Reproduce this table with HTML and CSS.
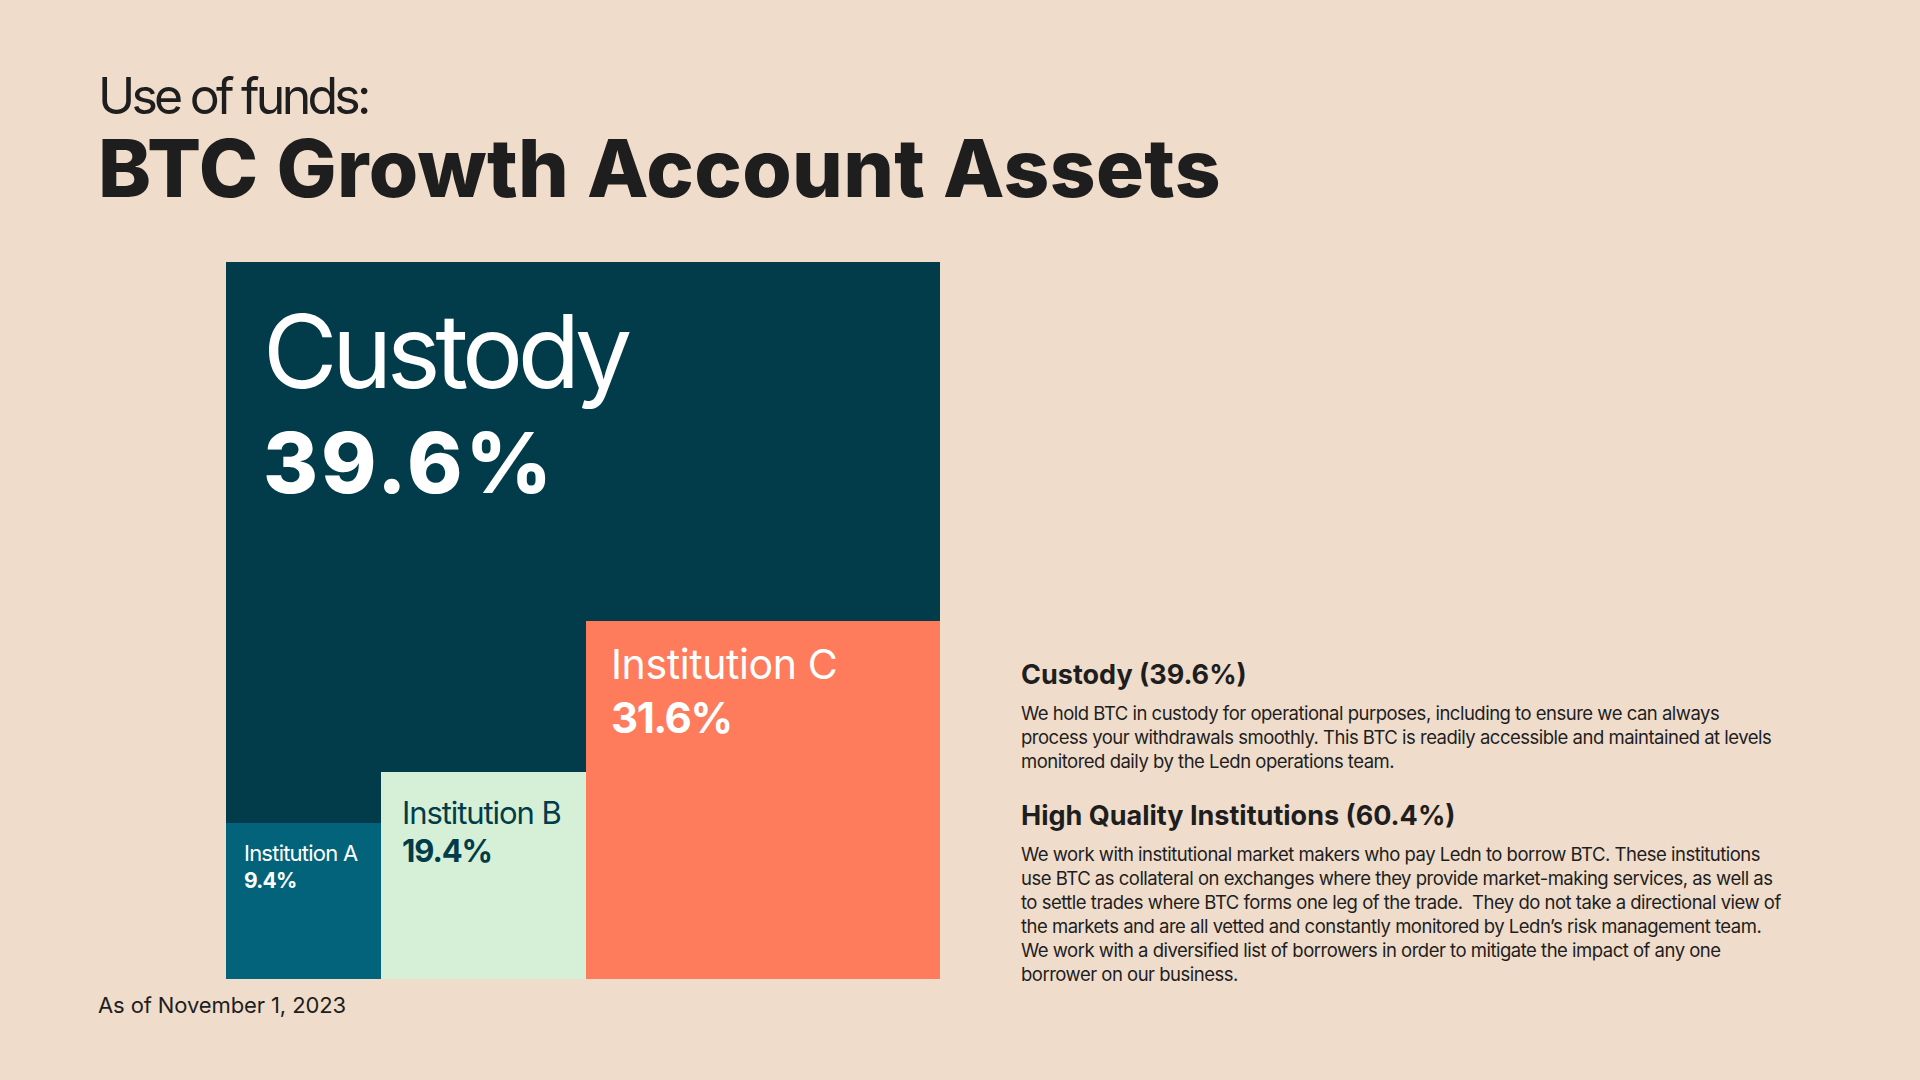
FILE: index.html
```html
<!DOCTYPE html>
<html lang="en">
<head>
<meta charset="utf-8">
<title>Use of funds: BTC Growth Account Assets</title>
<link rel="stylesheet" href="styles.css">
</head>
<body>
<main class="page">
  <header class="header">
    <p class="kicker">Use of funds:</p>
    <h1 class="title">BTC Growth Account Assets</h1>
  </header>
  <section class="content">
    <div class="chart-col">
      <div class="treemap">
        <div class="custody-label">
          <div class="big-name">Custody</div>
          <div class="big-pct">39.6%</div>
        </div>
        <div class="inst-row">
          <div class="tile tile-a">
            <div class="name">Institution A</div>
            <div class="pct">9.4%</div>
          </div>
          <div class="tile tile-b">
            <div class="name">Institution B</div>
            <div class="pct">19.4%</div>
          </div>
          <div class="tile tile-c">
            <div class="name">Institution C</div>
            <div class="pct">31.6%</div>
          </div>
        </div>
      </div>
    </div>
    <div class="notes">
      <h2 class="note-title">Custody (39.6%)</h2>
      <p class="note-text">We hold BTC in custody for operational purposes, including to ensure we can always<br>process your withdrawals smoothly. This BTC is readily accessible and maintained at levels<br>monitored daily by the Ledn operations team.</p>
      <h2 class="note-title second">High Quality Institutions (60.4%)</h2>
      <p class="note-text">We work with institutional market makers who pay Ledn to borrow BTC. These institutions<br>use BTC as collateral on exchanges where they provide market-making services, as well as<br>to settle trades where BTC forms one leg of the trade.&nbsp; They do not take a directional view of<br>the markets and are all vetted and constantly monitored by Ledn’s risk management team.<br>We work with a diversified list of borrowers in order to mitigate the impact of any one<br>borrower on our business.</p>
    </div>
  </section>
  <p class="date">As of November 1, 2023</p>
</main>
</body>
</html>
```

FILE: styles.css
```css
* { box-sizing: border-box; }

html, body {
  margin: 0;
  padding: 0;
}

body {
  width: 1920px;
  height: 1080px;
  overflow: hidden;
  background: #efdccb;
  color: #1e1e1e;
  font-family: Inter, "Noto Sans", "Liberation Sans", sans-serif;
}

.page {
  padding: 71px 0 0 98px;
}

.header {
  display: flex;
  flex-direction: column;
}

.kicker {
  margin: 0;
  font-size: 50px;
  line-height: 1;
  font-weight: 400;
  letter-spacing: -0.075em;
}

.title {
  margin: 7px 0 0 0;
  font-size: 80px;
  line-height: 1;
  font-weight: 800;
  letter-spacing: 0.004em;
}

.content {
  display: flex;
  align-items: flex-end;
  gap: 81px;
  margin-top: 54px;
}

.chart-col {
  padding-left: 128px;
}

.treemap {
  width: 714px;
  height: 717px;
  background: #023c4a;
  display: flex;
  flex-direction: column;
  color: #ffffff;
}

.custody-label {
  padding: 38px 0 0 37px;
}

.big-name {
  font-size: 102px;
  line-height: 1;
  font-weight: 400;
  letter-spacing: -0.054em;
}

.big-pct {
  margin-top: 19px;
  font-size: 84px;
  line-height: 1;
  font-weight: 800;
  letter-spacing: 0.035em;
}

.inst-row {
  margin-top: auto;
  display: flex;
  align-items: flex-end;
}

.tile {
  display: flex;
  flex-direction: column;
}

.tile .name,
.tile .pct {
  line-height: 1;
  letter-spacing: -0.035em;
}

.tile .name { font-weight: 400; }
.tile .pct { font-weight: 700; }

.tile-a {
  width: 155px;
  height: 156px;
  background: #03637a;
  padding: 19px 0 0 18px;
}
.tile-a .name { font-size: 22px; }
.tile-a .pct { font-size: 21px; margin-top: 6px; }

.tile-b {
  width: 205px;
  height: 207px;
  background: #d5f0d6;
  color: #023c4a;
  padding: 25px 0 0 21px;
}
.tile-b .name { font-size: 31px; }
.tile-b .pct { font-size: 31px; margin-top: 7px; }

.tile-c {
  width: 354px;
  height: 358px;
  background: #fe7b5c;
  padding: 23px 0 0 25px;
}
.tile-c .name { font-size: 41px; letter-spacing: -0.01em; }
.tile-c .pct { font-size: 42px; margin-top: 12px; }

.notes {
  margin-bottom: -7px;
  display: flex;
  flex-direction: column;
}

.note-title {
  margin: 0;
  font-size: 27px;
  line-height: 32px;
  font-weight: 700;
  letter-spacing: 0;
}

.note-title.second {
  margin-top: 27px;
}

.note-text {
  margin: 10px 0 0;
  font-size: 18.5px;
  line-height: 24px;
  font-weight: 400;
  letter-spacing: -0.027em;
  white-space: nowrap;
}

.date {
  margin: 15px 0 0;
  font-size: 22px;
  line-height: 1;
  letter-spacing: -0.005em;
}
```
